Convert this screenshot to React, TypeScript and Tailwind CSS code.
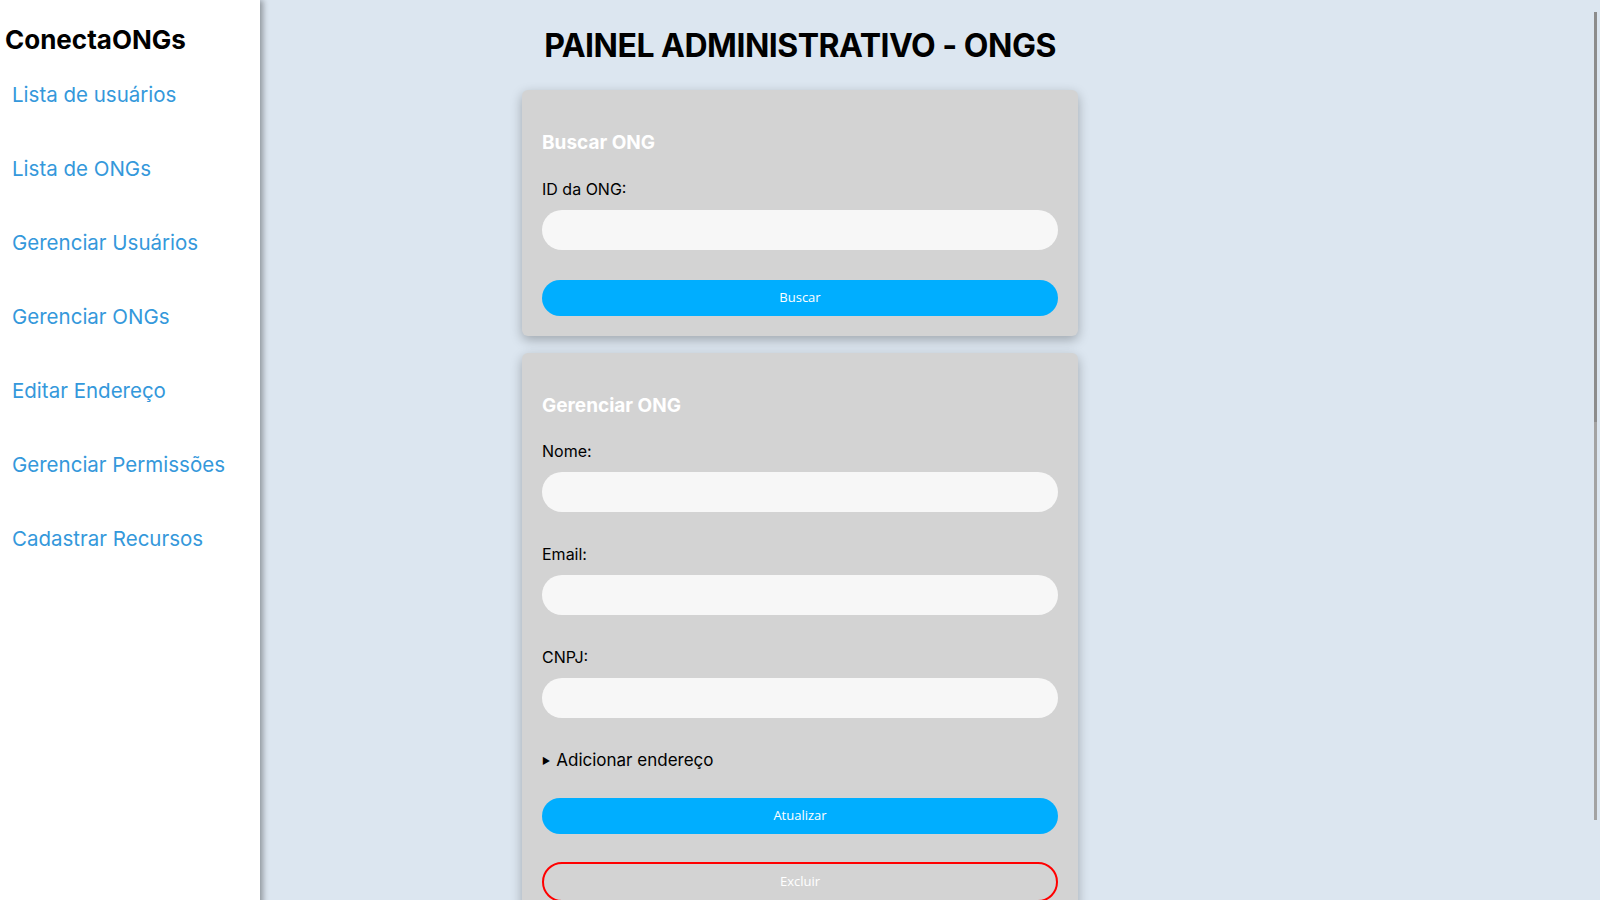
const links = [
  "Lista de usuários",
  "Lista de ONGs",
  "Gerenciar Usuários",
  "Gerenciar ONGs",
  "Editar Endereço",
  "Gerenciar Permissões",
  "Cadastrar Recursos",
];

const Field = ({ label }: { label: string }) => (
  <>
    <label className="mt-[30px] block text-[16px] leading-6 text-black">{label}</label>
    <input
      type="text"
      className="mt-[9px] block h-10 w-full rounded-full bg-[#f7f7f7] px-4 outline-none"
    />
  </>
);

const Sidebar = () => (
  <aside className="relative z-10 h-full bg-white shadow-[3px_0_6px_rgba(0,0,0,0.35)]">
    <div className="pl-[5px] pt-[24px] text-[26px] font-bold leading-8 text-black">
      ConectaONGs
    </div>
    <nav className="flex flex-col pl-3 pt-[25px]">
      {links.map((l) => (
        <a
          key={l}
          href="#"
          className="flex h-[74px] items-start text-[20.5px] leading-[28px] text-[#3498db]"
        >
          {l}
        </a>
      ))}
    </nav>
  </aside>
);

export default function App() {
  return (
    <div
      className="relative grid h-screen grid-cols-[260px_1fr_260px] overflow-hidden bg-[#dce6f0]"
      style={{ fontFamily: "Inter, 'Noto Sans', sans-serif" }}
    >
      <Sidebar />

      <main className="flex flex-col items-center pt-[26px]">
        <h1 className="text-[32px] font-bold leading-10 tracking-[-0.5px] text-black">
          PAINEL ADMINISTRATIVO - ONGS
        </h1>

        <section className="mt-6 w-[556px] rounded-md bg-[#d3d3d3] p-5 shadow-[0_4px_12px_rgba(0,0,0,0.28)]">
          <h2 className="mt-[19px] text-[19px] font-bold leading-7 text-white">Buscar ONG</h2>
          <label className="mt-5 block text-[16px] leading-6 text-black">ID da ONG:</label>
          <input
            type="text"
            className="mt-[9px] block h-10 w-full rounded-full bg-[#f7f7f7] px-4 outline-none"
          />
          <button
            className="mt-[30px] block h-9 w-full rounded-full bg-[#00aeff] text-[13px] text-white"
            style={{ fontFamily: "'Open Sans', sans-serif" }}
          >
            Buscar
          </button>
        </section>

        <section className="mt-[17px] w-[556px] shrink-0 rounded-md bg-[#d3d3d3] px-5 pb-6 pt-5 shadow-[0_4px_12px_rgba(0,0,0,0.28)]">
          <h2 className="mt-[19px] text-[19px] font-bold leading-7 text-white">Gerenciar ONG</h2>
          <div className="-mt-[11px]">
            <Field label="Nome:" />
          </div>
          <Field label="Email:" />
          <Field label="CNPJ:" />
          <details className="mt-[30px]">
            <summary className="flex cursor-pointer list-none items-center gap-[6px] text-[17px] leading-6 text-black [&::-webkit-details-marker]:hidden">
              <span className="text-[9px] leading-none">▶</span>
              Adicionar endereço
            </summary>
          </details>
          <button
            className="mt-[26px] block h-9 w-full rounded-full bg-[#00aeff] text-[13px] text-white"
            style={{ fontFamily: "'Open Sans', sans-serif" }}
          >
            Atualizar
          </button>
          <button
            className="mt-[28px] block h-10 w-full rounded-full border-2 border-[#ff0000] bg-transparent text-[13px] text-white"
            style={{ fontFamily: "'Open Sans', sans-serif" }}
          >
            Excluir
          </button>
        </section>
      </main>

      <div />

      {/* overlay scrollbar */}
      <div className="absolute right-[3px] top-[12px] flex h-[808px] w-[3px] flex-col">
        <div className="h-[410px] bg-[#8c8c8c]" />
        <div className="flex-1 bg-[#a3a3a3]" />
      </div>
    </div>
  );
}
